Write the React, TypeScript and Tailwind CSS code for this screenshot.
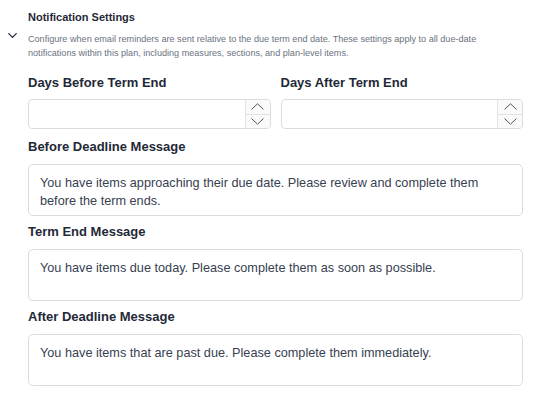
import { ChevronDown } from "lucide-react";

const MESSAGES = [
  {
    label: "Before Deadline Message",
    text: "You have items approaching their due date. Please review and complete them before the term ends.",
  },
  {
    label: "Term End Message",
    text: "You have items due today. Please complete them as soon as possible.",
  },
  {
    label: "After Deadline Message",
    text: "You have items that are past due. Please complete them immediately.",
  },
];

const Caret = ({ up }: { up?: boolean }) => (
  <svg width="13" height="7" viewBox="0 0 13 7" fill="none" stroke="currentColor" strokeWidth="1" strokeLinecap="round" strokeLinejoin="round">
    <path d={up ? "M0.8 6.2L6.5 0.8l5.7 5.4" : "M0.8 0.8l5.7 5.4 5.7-5.4"} />
  </svg>
);

function NumberField({ label }: { label: string }) {
  return (
    <div>
      <div className="h-4 text-[13px] font-bold leading-4 text-[#1f2937]">{label}</div>
      <div className="mt-2 flex h-[30px] overflow-hidden rounded-[4px] border border-[#d9dcdf] bg-white">
        <div className="flex-1" />
        <div className="flex w-[25px] flex-col border-l border-[#e1e3e6] bg-[#fafafa] text-[#4b5563]">
          <div className="flex flex-1 items-center justify-center border-b border-[#e1e3e6]">
            <Caret up />
          </div>
          <div className="flex flex-1 items-center justify-center">
            <Caret />
          </div>
        </div>
      </div>
    </div>
  );
}

export default function App() {
  return (
    <div
      className="h-[397px] w-[540px] bg-white pl-[28px] pr-[17px] pt-[10px]"
      style={{ fontFamily: '"Liberation Sans", Arial, sans-serif' }}
    >
      {/* header */}
      <div className="text-[11px] font-bold leading-[14px] text-[#1f2937]">Notification Settings</div>
      <div className="relative mt-[8px] whitespace-nowrap text-[9.1px] leading-[14px] text-[#6b7280]">
        <ChevronDown
          size={15}
          strokeWidth={2}
          className="absolute left-[-23px] top-[-4px] text-[#1f2937]"
        />
        Configure when email reminders are sent relative to the due term end date. These settings apply to all due-date
        <br />
        notifications within this plan, including measures, sections, and plan-level items.
      </div>

      {/* day counts */}
      <div className="mt-[15px] grid grid-cols-2 gap-[10px]">
        <NumberField label="Days Before Term End" />
        <NumberField label="Days After Term End" />
      </div>

      {/* messages */}
      <div className="mt-[10px] flex flex-col gap-[8px]">
        {MESSAGES.map((m) => (
          <div key={m.label}>
            <div className="h-4 text-[13px] font-bold leading-4 text-[#1f2937]">{m.label}</div>
            <div className="mt-[9px] h-[52px] rounded-[5px] border border-[#d9dcdf] px-[11px] pt-[9px] text-[12.7px] leading-[18px] text-[#374151]">
              {m.text}
            </div>
          </div>
        ))}
      </div>
    </div>
  );
}
